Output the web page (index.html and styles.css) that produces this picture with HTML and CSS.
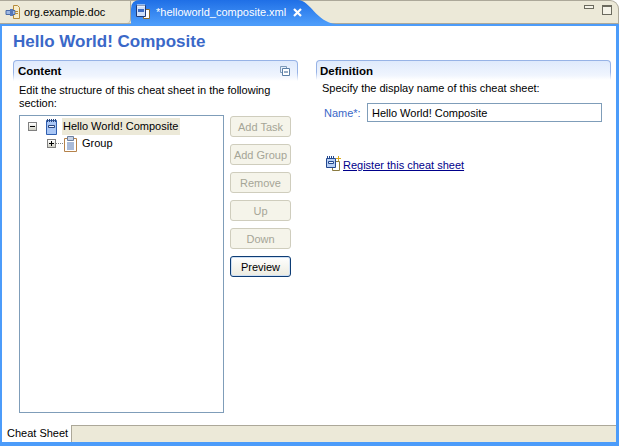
FILE: index.html
```html
<!DOCTYPE html>
<html>
<head>
<meta charset="utf-8">
<title>Cheat Sheet Editor</title>
<link rel="stylesheet" href="styles.css">
</head>
<body>
<svg class="defs" width="0" height="0">
  <defs>
    <symbol id="sheet" viewBox="0 0 16 16">
      <path d="M2.500 1.500h10v14h-10z" fill="#a9c6f5" stroke="#2f5fb0"/>
      <path d="M3.500 0v3M5.500 0v3M7.500 0v3M9.500 0v3M11.500 0v3" stroke="#27457f"/>
      <path d="M4.500 6.500h6v2h-6z" fill="#f2f6ff" stroke="#27457f"/>
    </symbol>
  </defs>
</svg>
<div class="app">
  <div class="tabbar">
    <div class="tab">
      <svg class="ic" viewBox="0 0 16 16" width="16" height="16">
        <path d="M8.500 1.500h4l2 2v11h-6z" fill="#f8eecb" stroke="#b58a3a"/>
        <path d="M1 6.500h9v4H1z" fill="#9fb9e2" stroke="#4b6ca8"/>
        <path d="M5 5h3v7H5z" fill="#5577b8"/>
        <path d="M10 7.500h3M10 9.500h3" stroke="#b58a3a"/>
      </svg>
      <span>org.example.doc</span>
    </div>
    <div class="tab tab-active">
      <svg class="ic" viewBox="0 0 16 16" width="16" height="16">
        <path d="M8.500 5.500h6v9h-6z" fill="#fff" stroke="#8a6a30"/>
        <path d="M1.500 1.500h9v11h-9z" fill="#cfe0fb" stroke="#1e3a78"/>
        <path d="M3 0v3M5 0v3M7 0v3M9 0v3" stroke="#fff"/>
        <path d="M3 5h6v3H3z" fill="#3c6cc4"/>
      </svg>
      <span class="tab-title">*helloworld_composite.xml</span>
      <svg class="close" viewBox="0 0 9 9" width="9" height="9">
        <path d="M1 1l7 7M8 1l-7 7" stroke="#fff" stroke-width="2.2" fill="none"/>
      </svg>
    </div>
    <div class="tab-controls">
      <span class="min"></span>
      <span class="max"></span>
    </div>
  </div>
  <div class="editor">
    <h1 class="title">Hello World! Composite</h1>
    <div class="columns">
      <section class="section section-left">
        <div class="sec-head">
          <span>Content</span>
          <svg class="collapse" viewBox="0 0 10 10" width="10" height="10">
            <path d="M.5.5h6v6h-6z" fill="none" stroke="#7f9bb8"/>
            <path d="M2.500 2.500h7v7h-7z" fill="#fff" stroke="#5b7fa6"/>
            <path d="M4 6h4" stroke="#2f5a8c"/>
          </svg>
        </div>
        <p class="desc">Edit the structure of this cheat sheet in the following section:</p>
        <div class="master">
          <div class="tree">
            <div class="node">
              <span class="toggle"><i class="bar"></i></span>
              <svg class="node-ic" width="16" height="16"><use href="#sheet"/></svg>
              <span class="node-label selected">Hello World! Composite</span>
            </div>
            <div class="node node-child">
              <span class="toggle"><i class="bar"></i><i class="bar bar-v"></i></span>
              <span class="dots"></span>
              <svg class="node-ic" viewBox="0 0 16 16" width="16" height="16">
                <path d="M1.500 2.500h12v13h-12z" fill="#fff" stroke="#b5824a"/>
                <path d="M4.500 .5h6v4h-6z" fill="#c9d4e6" stroke="#6d7f9c"/>
                <path d="M4 7h7M4 9h7M4 11h7M4 13h7" stroke="#5277b3"/>
              </svg>
              <span class="node-label">Group</span>
            </div>
          </div>
          <div class="buttons">
            <button class="btn" disabled>Add Task</button>
            <button class="btn" disabled>Add Group</button>
            <button class="btn" disabled>Remove</button>
            <button class="btn" disabled>Up</button>
            <button class="btn" disabled>Down</button>
            <button class="btn btn-default">Preview</button>
          </div>
        </div>
      </section>
      <section class="section section-right">
        <div class="sec-head sec-head-short"><span>Definition</span></div>
        <p class="desc desc-right">Specify the display name of this cheat sheet:</p>
        <div class="field">
          <label class="field-label">Name*:</label>
          <input class="field-input" value="Hello World! Composite">
        </div>
        <div class="register">
          <svg class="ic" viewBox="0 0 16 16" width="16" height="16">
            <path d="M6.500 5.500h7v9h-7z" fill="#fff" stroke="#8a7a40"/>
            <path d="M.5 2.500h9v9h-9z" fill="#b7cff5" stroke="#23488f"/>
            <path d="M2.500 5.500h5v2h-5z" fill="#f2f6ff" stroke="#23488f"/>
            <path d="M1.500 0v3M3.500 0v3M5.500 0v3M7.500 0v3" stroke="#23488f"/>
            <path d="M12.500 0v5M10 2.500h5" stroke="#d9a91e"/>
          </svg>
          <a class="link" href="#">Register this cheat sheet</a>
        </div>
      </section>
    </div>
    <div class="bottom-tabs">
      <div class="bottom-tab">Cheat Sheet</div>
      <div class="bottom-fill"></div>
    </div>
  </div>
</div>
</body>
</html>
```

FILE: styles.css
```css
* { box-sizing: border-box; }
html, body { margin: 0; padding: 0; }
body { font-family: "Liberation Sans", Arial, sans-serif; font-size: 11px; color: #000; background: #fff; overflow: hidden; }
.defs { position: absolute; }
.app { width: 619px; height: 446px; display: flex; flex-direction: column; }

.tabbar { height: 24px; flex: none; display: flex; background: #ece9d8; border-top: 1px solid #aca899; border-top-right-radius: 9px; border-right: 1px solid #aca899; border-bottom: 1px solid #aca899; }
.tab { width: 131px; flex: none; display: flex; align-items: center; gap: 3px; padding-left: 5px; border-right: 1px solid #aca899; border-bottom-right-radius: 4px; }
.tab-active { width: 205px; margin-top: -1px; height: 24px; padding-left: 4px; background: linear-gradient(#1f6fe6, #4c9cfa); color: #fff; border-right: 0; border-bottom-right-radius: 0; gap: 1px; clip-path: path("M0 24V9Q0 0 9 0H167C179 0 185 22 205 24Z"); }
.tab-title { width: 140px; padding-left: 4px; white-space: nowrap; }
.tab-controls { margin-left: auto; display: flex; align-items: flex-start; gap: 8px; padding: 4px 6px 0 0; }
.min { width: 10px; height: 4px; border: 1px solid #6b6a5e; background: #f5f3e8; }
.max { width: 10px; height: 10px; border: 1px solid #6b6a5e; border-top-width: 2px; background: #f5f3e8; }

.editor { flex: 1; min-height: 0; display: flex; flex-direction: column; border: solid #4c9cfa; border-width: 2px 3px 4px 2px; background: #fff; }
.title { margin: 4px 0 0 11px; height: 24px; font-size: 17px; line-height: 24px; font-weight: 700; color: #3a68c8; }
.columns { flex: 1; min-height: 0; display: grid; grid-template-columns: 285px 295px; gap: 18px; padding: 6px 0 0 11px; }
.section { min-width: 0; }
.sec-head { height: 21px; display: flex; align-items: center; justify-content: space-between; padding: 0 7px 0 4px; font-weight: 700; font-size: 11.500px; border: 1px solid transparent; border-bottom: 0; border-radius: 4px 4px 0 0; background: linear-gradient(#dfeafc, #f0f5fe 75%, #fff) padding-box, linear-gradient(#97b3e6 60%, #fff) border-box; }
.sec-head-short { height: 20px; padding-left: 3px; }
.desc { margin: 3px 0 0 6px; width: 270px; line-height: 13px; }
.desc-right { margin: 2px 0 0 6px; width: 285px; }
.master { display: flex; gap: 6px; margin: 5px 0 0 6px; }
.tree { width: 205px; height: 298px; border: 1px solid #7f9db9; padding-top: 2px; }
.node { height: 17px; display: flex; align-items: center; padding-left: 8px; }
.node-child { padding-left: 27px; }
.toggle { position: relative; width: 9px; height: 9px; flex: none; border: 1px solid #808080; background: linear-gradient(#fff, #cfcfc4); }
.bar { position: absolute; left: 1px; top: 3px; width: 5px; height: 1px; background: #000; }
.bar-v { left: 3px; top: 1px; width: 1px; height: 5px; }
.dots { width: 7px; border-top: 1px dotted #808080; }
.node-ic { margin-left: 7px; flex: none; }
.node-child .node-ic { margin-left: 0; }
.node-label { margin-left: 2px; padding: 0 3px; line-height: 17px; white-space: nowrap; }
.node-child .node-label { margin-left: 0; }
.selected { background: #ece9d8; padding: 0 2px 0 1px; }

.buttons { display: flex; flex-direction: column; gap: 7px; padding-top: 1px; }
.btn { width: 61px; height: 21px; padding: 0; font: inherit; border-radius: 3px; background: #f5f4ea; }
.btn[disabled] { color: #a5a597; border: 1px solid #cfcdbd; }
.btn-default { color: #000; border: 1px solid #0d3c74; box-shadow: inset 0 0 0 1px #cfe0f5; background: linear-gradient(#fff, #ecebe0); }

.field { display: flex; align-items: center; margin: 8px 0 0 8px; }
.field-label { width: 43px; color: #3a68c8; }
.field-input { width: 235px; height: 19px; padding: 0 4px; font: inherit; color: #000; border: 1px solid #7f9db9; outline: 0; }
.register { display: flex; align-items: center; gap: 1px; margin: 34px 0 0 10px; }
.register .ic { margin-bottom: 2px; }
.link { color: #00008b; text-decoration: underline; }

.bottom-tabs { flex: none; height: 17px; display: flex; }
.bottom-tab { width: 69px; flex: none; padding-left: 5px; line-height: 17px; color: #000; white-space: nowrap; }
.bottom-fill { flex: 1; background: #ece9d8; border-top: 1px solid #aca899; border-left: 1px solid #aca899; }
```
